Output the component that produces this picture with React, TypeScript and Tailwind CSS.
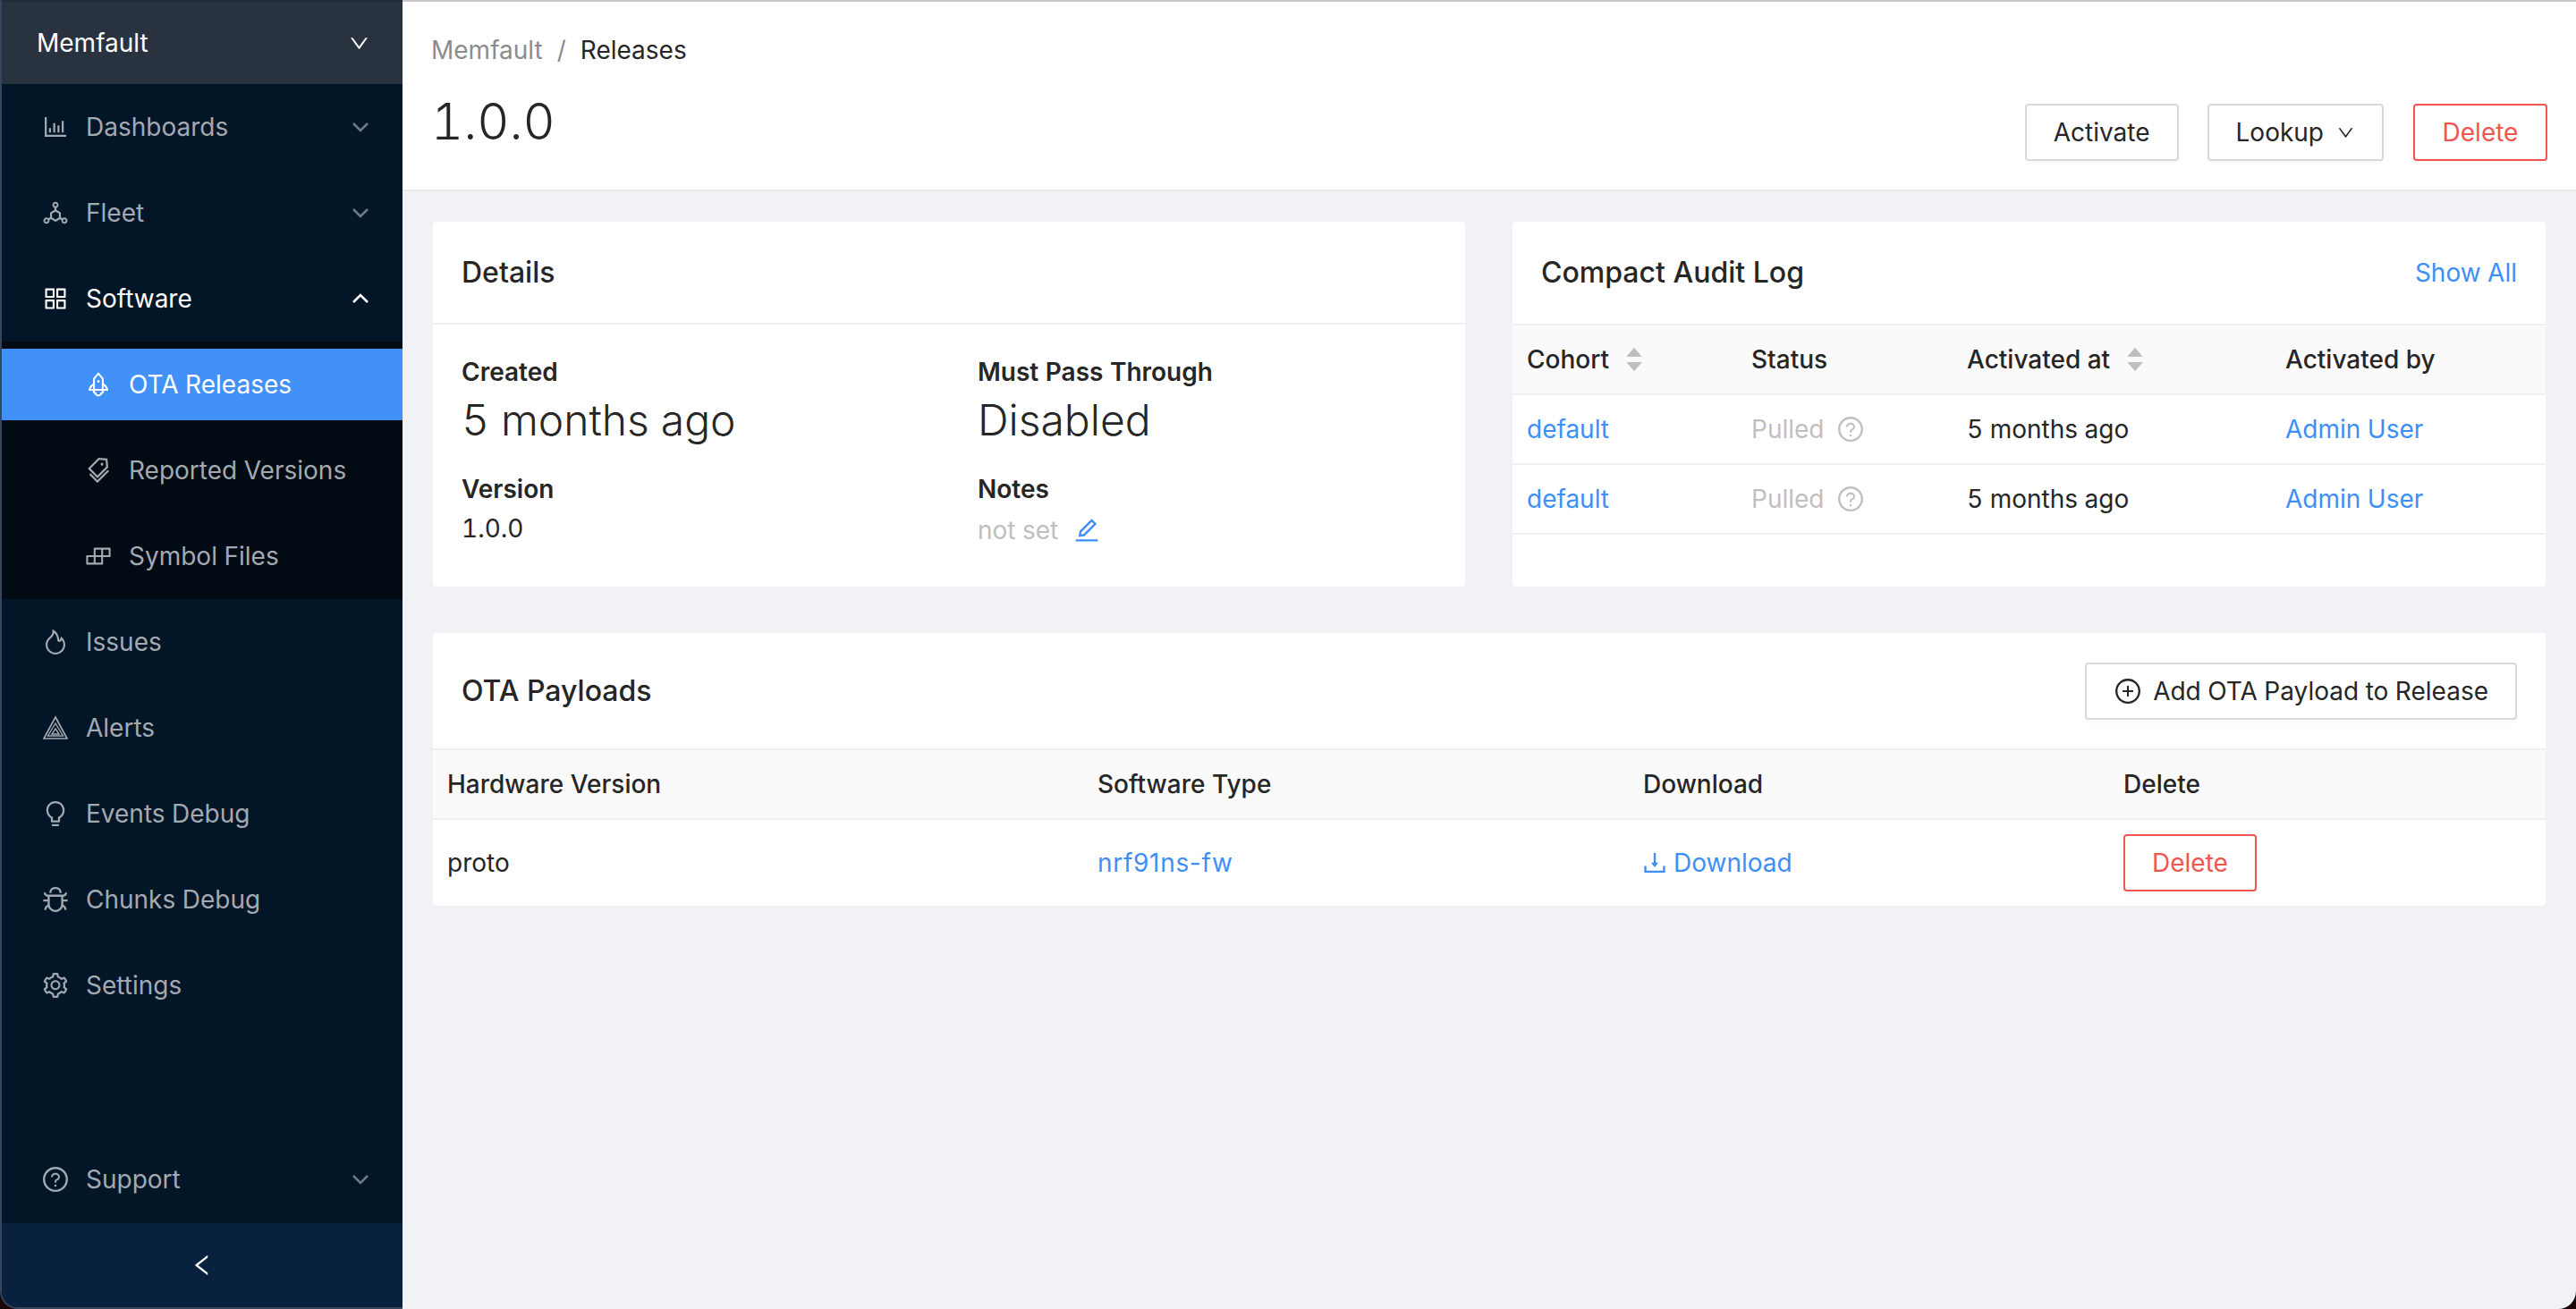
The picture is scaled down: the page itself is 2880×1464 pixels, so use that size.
import React from "react";
import {
  AiOutlineBarChart, AiOutlineDeploymentUnit, AiOutlineAppstore, AiOutlineRocket, AiOutlineTags, AiOutlineBuild,
  AiOutlineFire, AiOutlineBulb, AiOutlineBug, AiOutlineSetting, AiOutlineQuestionCircle, AiOutlineLeft, AiOutlineDown,
  AiOutlineEdit, AiOutlineDownload, AiOutlinePlusCircle, AiFillCaretUp, AiFillCaretDown,
} from "react-icons/ai";

const Arrow = ({ up = false }: { up?: boolean }) => (
  <svg width="18" height="12" viewBox="0 0 18 12" fill="none" stroke="currentColor" strokeWidth="2.6" className={up ? "text-white" : "text-[#6f7985]"}>
    <polyline points={up ? "1,10 9,2 17,10" : "1,2 9,10 17,2"} />
  </svg>
);

const AlertIcon = () => (
  <svg width="28" height="28" viewBox="0 0 28 28" fill="none" stroke="currentColor" strokeWidth="1.7">
    <path d="M14 2 L27 26 H1 Z" />
    <path d="M14 9 L22.5 23 H5.5 Z" strokeWidth="1.4" />
    <path d="M14 15 L18 21 H10 Z" strokeWidth="1.4" />
  </svg>
);

const Item = ({ icon, label, arrow, up, active, sub, className = "" }: { icon: React.ReactNode; label: string; arrow?: boolean; up?: boolean; active?: boolean; sub?: boolean; className?: string }) => (
  <div className={`flex h-20 shrink-0 items-center ${sub ? "pl-[94px]" : "pl-[46px]"} pr-[38px] ${active ? "bg-[#4291f8] text-white" : up ? "text-white" : "text-[#a3a9b1]"} ${className}`}>
    <span className="flex w-7 justify-center text-[32px] [&>svg]:shrink-0">{icon}</span>
    <span className="ml-[20px] flex-1 text-[28px]">{label}</span>
    {arrow && <Arrow up={up} />}
  </div>
);

const Btn = ({ children, danger, className = "" }: { children: React.ReactNode; danger?: boolean; className?: string }) => (
  <button className={`flex h-16 items-center rounded-[4px] border-2 bg-white text-[28px] shadow-[0_4px_0_rgba(0,0,0,0.015)] ${danger ? "border-[#f0564f] text-[#f0564f]" : "border-[#d9d9d9] text-[#262626]"} ${className}`}>
    {children}
  </button>
);

const Sort = () => (
  <span className="ml-[16px] flex flex-col text-[#bfbfbf] text-[24px] leading-none">
    <AiFillCaretUp className="-mb-[8px]" />
    <AiFillCaretDown />
  </span>
);

const Pulled = () => (
  <span className="flex items-center text-[#bfbfbf]">
    Pulled
    <AiOutlineQuestionCircle className="ml-[14px] text-[32px]" />
  </span>
);

const Link = ({ children }: { children: React.ReactNode }) => <span className="text-[#3d8ff7]">{children}</span>;

const auditCols = "grid grid-cols-[251px_241px_356px_307px] items-center";
const payloadCols = "grid grid-cols-[727px_610px_537px_488px] items-center";

export default function App() {
  return (
    <div className="flex h-[1464px] w-[2880px] overflow-hidden bg-[#1a0508] text-[28px] tabular-nums text-[#262626] [font-family:Inter,'Liberation_Sans',sans-serif]">
      <aside className="flex w-[450px] shrink-0 flex-col overflow-hidden rounded-bl-[20px] border-b-2 border-l-2 border-[#36465c] bg-[#031628]">
        <div className="flex h-[94px] shrink-0 items-center justify-between border-t-2 border-[#222c38] bg-[#29333f] pl-[39px] pr-[36px] text-white">
          <span>Memfault</span>
          <AiOutlineDown className="text-[25px]" />
        </div>
        <nav className="flex flex-1 flex-col pt-2">
          <Item icon={<AiOutlineBarChart />} label="Dashboards" arrow className="mb-4" />
          <Item icon={<AiOutlineDeploymentUnit />} label="Fleet" arrow className="mb-4" />
          <Item icon={<AiOutlineAppstore />} label="Software" arrow up className="mb-2" />
          <div className="mb-2 flex flex-col gap-4 bg-[#020a13] py-2">
            <Item sub active icon={<AiOutlineRocket />} label="OTA Releases" />
            <Item sub icon={<AiOutlineTags />} label="Reported Versions" />
            <Item sub icon={<AiOutlineBuild />} label="Symbol Files" />
          </div>
          <Item icon={<AiOutlineFire />} label="Issues" className="mb-4" />
          <Item icon={<AlertIcon />} label="Alerts" className="mb-4" />
          <Item icon={<AiOutlineBulb />} label="Events Debug" className="mb-4" />
          <Item icon={<AiOutlineBug />} label="Chunks Debug" className="mb-4" />
          <Item icon={<AiOutlineSetting />} label="Settings" />
          <div className="flex-1" />
          <Item icon={<AiOutlineQuestionCircle />} label="Support" arrow className="mb-[9px]" />
        </nav>
        <div className="flex h-[94px] shrink-0 items-center justify-center bg-[#07213f] text-white">
          <AiOutlineLeft className="text-[30px]" />
        </div>
      </aside>

      <main className="flex min-w-0 flex-1 flex-col rounded-br-[20px] bg-[#f0f2f5]">
        <header className="flex h-[214px] shrink-0 flex-col border-y-2 border-b-[#e8e8e8] border-t-[#c8c8cc] bg-white pl-[32px] pr-[32px]">
          <div className="mt-[32px] flex h-[44px] items-center">
            <span className="text-[#8c8c8c]">Memfault</span>
            <span className="mx-[16px] text-[#8c8c8c]">/</span>
            <span>Releases</span>
          </div>
          <div className="flex items-start justify-between">
            <h1 className="mt-[20px] text-[56px] font-light leading-[76px]">1.0.0</h1>
            <div className="mt-[38px] flex gap-[33px]">
              <Btn className="-mr-[1px] px-[30px]">Activate</Btn>
              <Btn className="px-[30px]">
                Lookup
                <AiOutlineDown className="ml-[14px] text-[21px]" />
              </Btn>
              <Btn danger className="w-[150px] justify-center">Delete</Btn>
            </div>
          </div>
        </header>

        <div className="flex flex-col gap-[52px] px-[34px] pt-[34px]">
          <div className="grid grid-cols-[1154px_1155px] justify-between">
            <section className="h-[408px] rounded-[4px] bg-white">
              <div className="flex h-[115px] items-center border-b-2 border-[#f0f0f0] px-[32px] text-[32px] font-medium">Details</div>
              <div className="grid grid-cols-[577px_1fr] px-[32px] pt-[31px]">
                <div className="flex flex-col">
                  <span className="font-semibold leading-[44px]">Created</span>
                  <span className="text-[48px] font-light leading-[64px]">5 months ago</span>
                  <span className="mt-[23px] font-semibold leading-[44px]">Version</span>
                  <span className="leading-[44px]">1.0.0</span>
                </div>
                <div className="flex flex-col">
                  <span className="font-semibold leading-[44px]">Must Pass Through</span>
                  <span className="text-[48px] font-light leading-[64px]">Disabled</span>
                  <span className="mt-[23px] font-semibold leading-[44px]">Notes</span>
                  <span className="flex items-center leading-[48px] text-[#bfbfbf]">
                    not set
                    <AiOutlineEdit className="ml-[16px] text-[32px] text-[#3d8ff7]" />
                  </span>
                </div>
              </div>
            </section>

            <section className="h-[408px] rounded-[4px] bg-white">
              <div className="flex h-[114px] items-center justify-between pl-[32px] pr-[32px] text-[32px] font-medium">
                <span>Compact Audit Log</span>
                <span className="text-[28px] font-normal text-[#3d8ff7]">Show All</span>
              </div>
              <div className={`${auditCols} h-[80px] border-y-2 border-[#f0f0f0] bg-[#fafafa] font-medium`}>
                <span className="flex items-center pl-[16px]">Cohort<Sort /></span>
                <span className="pl-[16px]">Status</span>
                <span className="flex items-center pl-[16px]">Activated at<Sort /></span>
                <span className="pl-[16px]">Activated by</span>
              </div>
              {[0, 1].map((i) => (
                <div key={i} className={`${auditCols} h-[78px] border-b-2 border-[#f0f0f0]`}>
                  <span className="pl-[16px]"><Link>default</Link></span>
                  <span className="pl-[16px]"><Pulled /></span>
                  <span className="pl-[16px]">5 months ago</span>
                  <span className="pl-[16px]"><Link>Admin User</Link></span>
                </div>
              ))}
            </section>
          </div>

          <section className="h-[305px] rounded-[4px] bg-white">
            <div className="flex h-[129px] items-center justify-between pl-[32px] pr-[32px] text-[32px] font-medium">
              <span>OTA Payloads</span>
              <Btn className="px-[30px] font-normal">
                <AiOutlinePlusCircle className="mr-[12px] text-[32px]" />
                Add OTA Payload to Release
              </Btn>
            </div>
            <div className={`${payloadCols} h-[80px] border-y-2 border-[#f0f0f0] bg-[#fafafa] font-medium`}>
              <span className="pl-[16px]">Hardware Version</span>
              <span className="pl-[16px]">Software Type</span>
              <span className="pl-[16px]">Download</span>
              <span className="pl-[16px]">Delete</span>
            </div>
            <div className={`${payloadCols} h-[96px]`}>
              <span className="pl-[16px]">proto</span>
              <span className="pl-[16px] normal-nums tracking-[0.7px]"><Link>nrf91ns-fw</Link></span>
              <span className="pl-[16px]">
                <span className="flex items-center text-[#3d8ff7]">
                  <AiOutlineDownload className="-ml-[3px] mr-[5px] text-[32px]" />
                  Download
                </span>
              </span>
              <span className="pl-[16px]"><Btn danger className="px-[30px]">Delete</Btn></span>
            </div>
          </section>
        </div>
      </main>
    </div>
  );
}
